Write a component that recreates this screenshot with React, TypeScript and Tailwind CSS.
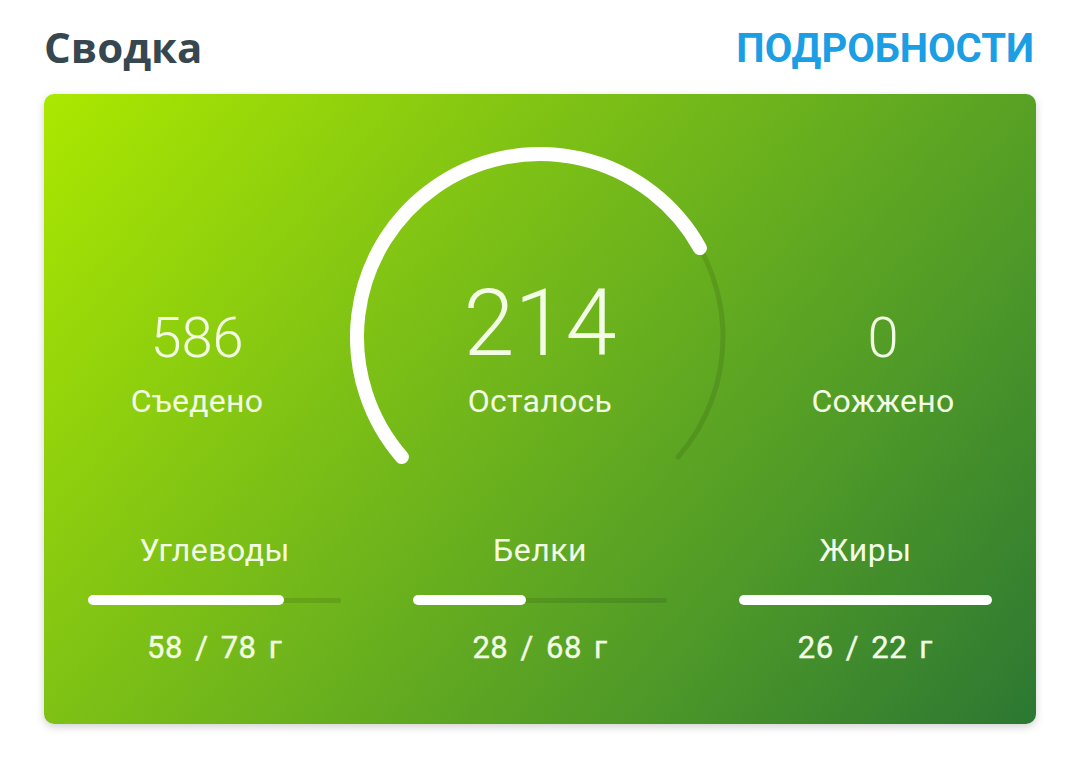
import React from "react";

const FONT = { fontFamily: "Roboto, 'Noto Sans', sans-serif" };

// Gauge geometry (screen coords, angles clockwise from +x)
const CX = 190;
const CY = 190;
const R = 183;
const START = 139;
const SWEEP = 262;

function pt(deg: number) {
  const a = (deg * Math.PI) / 180;
  return [CX + R * Math.cos(a), CY + R * Math.sin(a)];
}

function arc(from: number, to: number) {
  const [x1, y1] = pt(from);
  const [x2, y2] = pt(to);
  const large = to - from > 180 ? 1 : 0;
  return `M ${x1.toFixed(2)} ${y1.toFixed(2)} A ${R} ${R} 0 ${large} 1 ${x2.toFixed(2)} ${y2.toFixed(2)}`;
}

function Gauge({ eaten, goal }: { eaten: number; goal: number }) {
  const frac = Math.min(eaten / goal, 1);
  return (
    <svg className="absolute inset-0" width="380" height="320" viewBox="0 0 380 320" fill="none">
      <path d={arc(START, START + SWEEP)} stroke="rgba(0,0,0,0.1)" strokeWidth="5" strokeLinecap="round" />
      <path d={arc(START, START + SWEEP * frac)} stroke="#ffffff" strokeWidth="14" strokeLinecap="round" />
    </svg>
  );
}

function SideStat({ value, label }: { value: string; label: string }) {
  return (
    <div className="flex flex-col items-center pt-[163px]">
      <div className="text-[56px] leading-none font-light">{value}</div>
      <div className="mt-[19px] text-[32px] leading-none tracking-[0.3px]">{label}</div>
    </div>
  );
}

function Macro({ label, value, max }: { label: string; value: number; max: number }) {
  const pct = Math.min(value / max, 1) * 100;
  return (
    <div className="flex flex-col items-center">
      <div className="text-[32px] leading-none tracking-[0.5px]">{label}</div>
      <div className="mt-[29px] relative w-full h-[10px] flex items-center">
        <div className="w-full h-[5px] rounded-full bg-black/10" />
        <div
          className="absolute left-0 top-0 h-[10px] rounded-full bg-white"
          style={{ width: `calc(${pct}% + ${pct < 100 ? 8 : 0}px)` }}
        />
      </div>
      <div className="mt-[27px] text-[31px] leading-none font-normal tracking-[0.5px] [word-spacing:4px] [-webkit-text-stroke:0.4px_#f3fde6]">
        {value} / {max} г
      </div>
    </div>
  );
}

export default function App() {
  return (
    <div className="w-[1080px] h-[762px] bg-white px-[44px] pt-[26px]" style={FONT}>
      <div className="flex items-start justify-between">
        <h1 className="text-[42px] leading-none font-bold text-[#37474f]" style={{ fontFamily: "'Open Sans', Roboto, sans-serif" }}>
          Сводка
        </h1>
        <a className="mt-[3px] text-[40px] leading-none font-bold text-[#1b9ee4] mr-[2px]">ПОДРОБНОСТИ</a>
      </div>

      <div className="mt-[25px] h-[630px] rounded-[10px] shadow-[0_3px_8px_rgba(0,0,0,0.18)] bg-[linear-gradient(130deg,#abe800_0%,#78bc18_40%,#4f9a28_72%,#2c7732_100%)] text-[#f3fde6] pt-[53px]">
        <div className="grid grid-cols-[1fr_380px_1fr]">
          <SideStat value="586" label="Съедено" />
          <div className="relative h-[320px] flex flex-col items-center pt-[131px]">
            <Gauge eaten={586} goal={800} />
            <div className="relative text-[92px] leading-none font-light">214</div>
            <div className="relative mt-[15px] text-[32px] leading-none tracking-[0.3px]">Осталось</div>
          </div>
          <SideStat value="0" label="Сожжено" />
        </div>

        <div className="grid grid-cols-3 gap-[72px] px-[44px] mt-[67px]">
          <Macro label="Углеводы" value={58} max={78} />
          <Macro label="Белки" value={28} max={68} />
          <Macro label="Жиры" value={26} max={22} />
        </div>
      </div>
    </div>
  );
}
